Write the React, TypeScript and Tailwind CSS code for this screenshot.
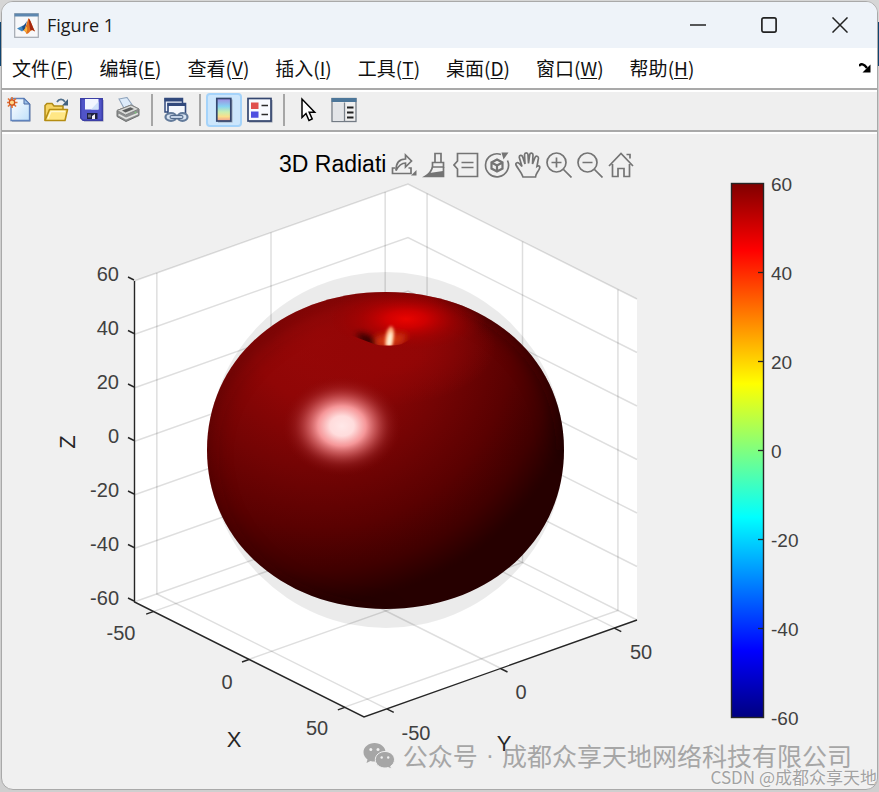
import type { ReactNode } from 'react';

const MENUS = [
  { label: '文件', accessKey: 'F' },
  { label: '编辑', accessKey: 'E' },
  { label: '查看', accessKey: 'V' },
  { label: '插入', accessKey: 'I' },
  { label: '工具', accessKey: 'T' },
  { label: '桌面', accessKey: 'D' },
  { label: '窗口', accessKey: 'W' },
  { label: '帮助', accessKey: 'H' },
];

const TICKS = [60, 40, 20, 0, -20, -40, -60];

// Outline of the axes box
const LEFT = { x: 134, y: 281 };
const BACK = { x: 408, y: 184 };
const RIGHT = { x: 637, y: 299 };
const FRONT = { x: 364, y: 717 };
const HEIGHT = 321;
const Z_STEP = HEIGHT / 6;

const FLOOR_TICKS = [
  { value: -50, t: 1 / 12 },
  { value: 0, t: 0.5 },
  { value: 50, t: 11 / 12 },
];

const X_LABELS = [
  { text: '-50', x: 121, y: 640 },
  { text: '0', x: 227, y: 689 },
  { text: '50', x: 317, y: 735 },
];

const Y_LABELS = [
  { text: '-50', x: 416, y: 740 },
  { text: '0', x: 521, y: 699 },
  { text: '50', x: 641, y: 659 },
];

function MatlabLogo() {
  return (
    <svg viewBox="0 0 25 25" className="h-[25px] w-[25px]" aria-hidden="true">
      <rect x="0.7" y="0.7" width="23.6" height="23.6" fill="#f7f8fa" stroke="#a3a9b1" strokeWidth="1.2" />
      <path d="M0.5 0.5h24v3h-24z" fill="#5d87b0" />
      <path d="M3 15.5l5-2.5 3 3-3 2.5z" fill="#3c86c0" />
      <path d="M8 13c2-.5 3-2 5-5l-2 8-2 1.500z" fill="#1d4f86" />
      <path d="M14.500 5.500c1.500 0 3.500 7 6.500 13-2-1.500-3.500-1.800-5 0-1.200 1.500-2.200 2.200-3.500 2.500-.8-2-2-3.500-3.500-3.500 3-1.500 3.800-9 5.500-12z" fill="#e0701f" />
      <path d="M14.500 5.500c1.500 0 3.500 7 6.500 13-2-1.500-3.300-2-4.500-1-1-3-1.200-8-2-12z" fill="#a3260f" />
      <path d="M12.500 13.500c1 1.500 1 4-.2 6.500-.6-1.500-1.500-2.300-2.500-2.500z" fill="#f8b43c" />
    </svg>
  );
}

function NewIcon() {
  return (
    <svg viewBox="0 0 26 26" className="h-[26px] w-[26px]" aria-hidden="true">
      <defs>
        <linearGradient id="page" x1="0" y1="0" x2="1" y2="1">
          <stop offset="0" stopColor="#ffffff" />
          <stop offset="1" stopColor="#bfe0fa" />
        </linearGradient>
      </defs>
      <path d="M5 2.500h13.500l5 5V24.500H5z" fill="#6d7fa0" />
      <path d="M4 1.500h13l5.500 5.500v16.500H4z" fill="url(#page)" stroke="#5f83bd" strokeWidth="1.3" />
      <path d="M17 1.500V7h5.500z" fill="#9cc3ea" stroke="#4a6aa5" />
      <path d="M5 0v11M-.5 5.500h11M1 1.500l8 8M9 1.500l-8 8" stroke="#e0743a" strokeWidth="1.700" />
      <circle cx="5" cy="5.500" r="2.700" fill="#ffd98a" stroke="#d0501a" strokeWidth="1.300" />
    </svg>
  );
}

function OpenIcon() {
  return (
    <svg viewBox="0 0 26 26" className="h-[26px] w-[26px]" aria-hidden="true">
      <path d="M2 23.500V8.500l2-2h5l2 2.500h9v3" fill="#f6d462" stroke="#b08a14" strokeWidth="1.500" />
      <path d="M2 23.500L6.500 12.500H24.500L22 23.500z" fill="#ffe785" stroke="#b58d12" strokeWidth="1.600" strokeLinejoin="round" />
      <path d="M5 21.500L8 14.500h14" fill="none" stroke="#fff8cf" strokeWidth="1.300" />
      <path d="M14 5c2-3.500 6-3.500 8 0" fill="none" stroke="#53718c" strokeWidth="1.800" />
      <path d="M25 2v6.500h-6z" fill="#41617d" />
    </svg>
  );
}

function SaveIcon() {
  return (
    <svg viewBox="0 0 26 26" className="h-[26px] w-[26px]" aria-hidden="true">
      <path d="M3 3h21.500v21.500H5z" fill="#8d8fae" />
      <path d="M1.700 1.700h21.600v21.600H4L1.700 21z" fill="#5054c8" stroke="#3c3fa6" strokeWidth="1.400" />
      <path d="M6 2h13.500v10.500H6z" fill="#f2f5ff" />
      <path d="M12 12.500l7.500-8v8z" fill="#cfe0fa" />
      <path d="M8 16h10.500v6H8z" fill="#1f2140" />
      <path d="M13 19l3-2v5h-3z" fill="#f2f2f6" />
      <path d="M9 17.500h3v3H9z" fill="#6b6e80" />
    </svg>
  );
}

function PrintIcon() {
  return (
    <svg viewBox="0 0 26 26" className="h-[26px] w-[26px]" aria-hidden="true">
      <path d="M4 2l8-1.500L18 9l-8 4z" fill="#ddebfa" stroke="#8fa4bd" strokeWidth="1.100" />
      <path d="M2 13.500L16 8l8 4v6.500L11 24.500 2 19.500z" fill="#8d8f8f" stroke="#6e7070" strokeLinejoin="round" />
      <path d="M2 13.500L16 8l8 4-13.500 6z" fill="#d9dad8" stroke="#828484" strokeLinejoin="round" />
      <path d="M7 13.500l8.500-3.300 3.500 1.800-8.500 3.500z" fill="#5b5d5d" />
      <path d="M3.500 17.500l7.500 4 12-5" fill="none" stroke="#e3e4e2" strokeWidth="1.700" />
      <circle cx="20.500" cy="15.500" r="1" fill="#7cc47a" />
    </svg>
  );
}

function LinkIcon() {
  return (
    <svg viewBox="0 0 26 26" className="h-[26px] w-[26px]" aria-hidden="true">
      <path d="M2 1.500h17.500V15H2z" fill="#eef3fb" stroke="#31497c" strokeWidth="1.500" />
      <path d="M1.500 1h18.500v3.500H1.500z" fill="#31497c" />
      <path d="M5 6.500h17.500V19H5z" fill="#f5f8fd" stroke="#31497c" strokeWidth="1.600" />
      <path d="M4.500 6h18.500v3H4.500z" fill="#31497c" />
      <ellipse cx="8" cy="20" rx="5.500" ry="3.800" fill="#d9e4f2" stroke="#637b9b" strokeWidth="2.200" />
      <ellipse cx="19.500" cy="20" rx="5" ry="3.800" fill="#d9e4f2" stroke="#637b9b" strokeWidth="2.200" />
      <path d="M8.500 20h10" stroke="#536b8c" strokeWidth="4" strokeLinecap="round" />
      <path d="M8.500 20h10" stroke="#c3d2e6" strokeWidth="1.800" strokeLinecap="round" />
    </svg>
  );
}

function ColorbarIcon() {
  return (
    <svg viewBox="0 0 26 26" className="h-[26px] w-[26px]" aria-hidden="true">
      <defs>
        <linearGradient id="mini" x1="0" y1="0" x2="0" y2="1">
          <stop offset="0" stopColor="#a08ae0" />
          <stop offset="0.350" stopColor="#86d3f2" />
          <stop offset="0.600" stopColor="#c9efb0" />
          <stop offset="0.800" stopColor="#f9e08b" />
          <stop offset="1" stopColor="#f29c8d" />
        </linearGradient>
      </defs>
      <path d="M7 2.500h14.500v23H7z" fill="#9aa5b5" />
      <rect x="5.800" y="1.500" width="14" height="22.500" fill="url(#mini)" stroke="#34466f" strokeWidth="1.700" />
    </svg>
  );
}

function LegendIcon() {
  return (
    <svg viewBox="0 0 26 26" className="h-[26px] w-[26px]" aria-hidden="true">
      <path d="M2 3h23.500v22.500H2z" fill="#9199a8" />
      <rect x="1" y="1.500" width="23" height="22.500" fill="#f8faff" stroke="#34466f" strokeWidth="1.700" />
      <path d="M4 5.500h7.500V12H4z" fill="#e0504f" />
      <path d="M4 14.500h7.500v6.300H4z" fill="#4d4ee0" />
      <path d="M14.500 8.500H21M14.500 17.500H21" stroke="#2b2b2b" strokeWidth="1.700" />
    </svg>
  );
}

function PointerIcon() {
  return (
    <svg viewBox="0 0 26 26" className="h-[26px] w-[26px]" aria-hidden="true">
      <path
        d="M7 2v18.500l4-4 3 7 3.200-1.500-3-6.700h5.500z"
        fill="#fff"
        stroke="#000"
        strokeWidth="1.500"
      />
    </svg>
  );
}

function InspectorIcon() {
  return (
    <svg viewBox="0 0 26 26" className="h-[26px] w-[26px]" aria-hidden="true">
      <rect x="1" y="1.500" width="24" height="23" fill="#efefef" stroke="#737b84" strokeWidth="1.300" />
      <path d="M.5 1h25v4H.5z" fill="#4c7699" />
      <path d="M2 5.500h10.500V24H2z" fill="#e3e5e8" />
      <path d="M13.500 5.500V24" stroke="#7b838c" strokeWidth="1.300" />
      <path d="M16 10.500h6.500M16 15.500h6.500M16 20.500h6.500" stroke="#222" strokeWidth="1.900" />
    </svg>
  );
}

const FILE_TOOLS = [
  { label: '新建图窗', icon: NewIcon },
  { label: '打开文件', icon: OpenIcon },
  { label: '保存图窗', icon: SaveIcon },
  { label: '打印图窗', icon: PrintIcon },
];

function ToolButton({ label, active, children }: { label: string; active?: boolean; children: ReactNode }) {
  return (
    <button
      type="button"
      aria-label={label}
      className={
        active
          ? 'flex h-[34px] w-9 items-center justify-center rounded-[4px] border-2 border-[#a5d3fa] bg-[#cce6fc]'
          : 'flex h-[34px] w-9 items-center justify-center rounded-[4px] hover:bg-[#e0eefa]'
      }
    >
      {children}
    </button>
  );
}

function Separator() {
  return <div className="mx-[5px] h-8 w-[2px] bg-[#a6a6a6]" />;
}

const AXES_TOOLS = [
  {
    label: '导出',
    shape: (
      <>
        <path d="M4 16H1.500v5.500H20V16h-2.500" />
        <path d="M5 18.500c0-8 3-11.500 9.500-11.500V3l6 6-6 6v-4c-4 0-6.500 2-9.500 7.500z" />
        <path d="M25.500 18v5.500H20z" fill="#747474" stroke="none" />
      </>
    ),
  },
  {
    label: '刷亮/选择数据',
    shape: (
      <>
        <path d="M13 1.500h6v9h-6zM10.500 10.500h11V15h-11z" />
        <path d="M10.500 15c-1 4-3 7-7.500 9.500h18.500V15" />
        <path d="M7.500 21L21 19V24H4z" fill="#747474" stroke="none" />
      </>
    ),
  },
  {
    label: '数据提示',
    shape: <path d="M4.500 1.500h20v23h-20V17L1 13l3.500-4zM8.500 10.500h12M8.500 15.500h12" />,
  },
  {
    label: '三维旋转',
    shape: (
      <>
        <path d="M17 2.500A11.500 11.500 0 1 0 23.500 8.500" />
        <path d="M17.500 0.500h7l-5 7z" fill="#747474" stroke="none" />
        <path d="M13 7.500l5.500 3v6L13 19.500l-5.500-3v-6zM7.500 10.500l5.500 3 5.500-3M13 13.500v6" strokeWidth="2.200" />
      </>
    ),
  },
  {
    label: '平移',
    shape: (
      <path d="M8 25C6.500 20 3 17 1 13c-.8-2.300 2-3.300 3.500-1.200L7 14.500 4.300 5.500c-.3-2.400 2.600-3 3.400-.5l2.300 7L9.500 2.700c.2-2.400 3.300-2.400 3.500 0l.5 8.800 1.200-8.800c.4-2.400 3.300-2 3.300.3L17.500 12l2.500-6.500c.9-2.200 3.600-1.400 3.400.9l-1.400 8c2-1.500 3.500 0 2.300 2.600C23 20 21 21 20.500 25z" />
    ),
  },
  {
    label: '放大',
    shape: (
      <>
        <circle cx="10.500" cy="10.500" r="9.500" />
        <path d="M17.500 17.500l8 8M5.500 10.500h10M10.500 5.500v10" />
      </>
    ),
  },
  {
    label: '缩小',
    shape: (
      <>
        <circle cx="10.500" cy="10.500" r="9.500" />
        <path d="M17.500 17.500l8 8M5.500 10.500h10" />
      </>
    ),
  },
  {
    label: '还原视图',
    shape: (
      <>
        <path d="M1 14L13 1.500 25 14M4.500 12v12.500h5.500v-8h6v8h5.500V12" />
        <path d="M18.500 2.500H22v4" />
      </>
    ),
  },
];

function Apple() {
  return (
    <g>
      <defs>
        <radialGradient id="skin" gradientUnits="userSpaceOnUse" cx="320" cy="334" r="268">
          <stop offset="0" stopColor="#980808" />
          <stop offset="0.250" stopColor="#900606" />
          <stop offset="0.500" stopColor="#740404" />
          <stop offset="0.720" stopColor="#5a0101" />
          <stop offset="0.880" stopColor="#400000" />
          <stop offset="0.980" stopColor="#290000" />
          <stop offset="1" stopColor="#260000" />
        </radialGradient>
        <radialGradient id="shine">
          <stop offset="0" stopColor="#ffe8e8" />
          <stop offset="0.200" stopColor="#ffdcdc" />
          <stop offset="0.400" stopColor="#fa9c9e" stopOpacity="0.960" />
          <stop offset="0.580" stopColor="#d8686a" stopOpacity="0.700" />
          <stop offset="0.780" stopColor="#b03a3c" stopOpacity="0.300" />
          <stop offset="1" stopColor="#800808" stopOpacity="0" />
        </radialGradient>
        <radialGradient id="glow">
          <stop offset="0" stopColor="#ea0400" />
          <stop offset="0.250" stopColor="#d60000" stopOpacity="0.900" />
          <stop offset="0.600" stopColor="#b00000" stopOpacity="0.450" />
          <stop offset="1" stopColor="#900000" stopOpacity="0" />
        </radialGradient>
        <radialGradient id="lip">
          <stop offset="0" stopColor="#940606" />
          <stop offset="0.350" stopColor="#940606" stopOpacity="0.850" />
          <stop offset="1" stopColor="#940606" stopOpacity="0" />
        </radialGradient>
        <filter id="soft" filterUnits="userSpaceOnUse" x="150" y="240" width="470" height="420">
          <feGaussianBlur stdDeviation="13" />
        </filter>
        <filter id="fade" filterUnits="userSpaceOnUse" x="340" y="300" width="100" height="60">
          <feGaussianBlur stdDeviation="3" />
        </filter>
        <filter id="glint" filterUnits="userSpaceOnUse" x="340" y="300" width="100" height="60">
          <feGaussianBlur stdDeviation="1.500" />
        </filter>
        <clipPath id="body">
          <path
            d="M386 292C489 292 564 359 564 450S489 609 386 609 207 541 207 450 283 292 386 292z"
            shapeRendering="crispEdges"
          />
        </clipPath>
        <clipPath id="dimple">
          <path d="M340 300H440V332C418 332 409 341 402 344C394 346 380 346 374 344C366 341 354 336 340 332z" />
        </clipPath>
      </defs>
      <g clipPath="url(#body)">
        <path d="M200 285h370v330H200z" fill="url(#skin)" />
        <path d="M446 286C510 300 576 360 578 450" fill="none" stroke="#140000" strokeWidth="26" filter="url(#soft)" opacity="0.700" />
        <path d="M420 284C310 282 201 350 199 450S280 621 386 623" fill="none" stroke="#200000" strokeWidth="12" filter="url(#soft)" opacity="0.500" />
        <ellipse cx="384" cy="346" rx="112" ry="60" fill="url(#lip)" />
        <ellipse cx="406" cy="319" rx="80" ry="33" fill="url(#glow)" />
        <ellipse cx="380" cy="358" rx="50" ry="20" fill="url(#lip)" />
        <g clipPath="url(#dimple)">
          <path d="M356 334c8-2 20 3 22 13-12 0-17-5-22-13z" fill="#2a0400" filter="url(#fade)" />
          <path d="M374 338c8-5 26-8 34-2l-8 10-24 2z" fill="#cc3010" filter="url(#fade)" />
          <path d="M391 326c5 3 3 12 1 20h-7c0-8 1-17 6-20z" fill="#ffa878" filter="url(#glint)" />
          <path d="M391 331c2 3 1 9 0 15h-4c0-6 1-12 4-15z" fill="#fff6dc" filter="url(#glint)" />
        </g>
        <ellipse cx="342" cy="426" rx="60" ry="50" fill="url(#shine)" />
      </g>
    </g>
  );
}

function Axes() {
  return (
    <svg
      viewBox="2 134 875 655"
      className="block w-full font-['Liberation_Sans',Arial,sans-serif]"
      role="img"
      aria-label="3D Radiation"
    >
      <path d="M134 281L408 184 637 299V620L364 717 134 602z" fill="#fff" />

      <g fill="none" stroke="#000" strokeOpacity="0.130" strokeWidth="1.500">
        {TICKS.map((value, i) => (
          <path
            key={value}
            d={`M${LEFT.x} ${LEFT.y + i * Z_STEP}L${BACK.x} ${BACK.y + i * Z_STEP}L${RIGHT.x} ${RIGHT.y + i * Z_STEP}`}
          />
        ))}
        {FLOOR_TICKS.map(({ value, t }) => {
          const leftX = LEFT.x + 274 * t;
          const leftY = LEFT.y - 97 * t;
          const rightX = BACK.x + 229 * t;
          const rightY = BACK.y + 115 * t;
          return (
            <g key={value}>
              <path d={`M${leftX} ${leftY}v${HEIGHT}l230 115`} />
              <path d={`M${rightX} ${rightY}v${HEIGHT}l-274 97`} />
            </g>
          );
        })}
      </g>

      <circle cx="386" cy="450" r="178" fill="#000" fillOpacity="0.080" />
      <Apple />

      <g fill="none" stroke="#262626" strokeWidth="1.400">
        <path d="M134.500 281V602L364 717 637 620" />
        {TICKS.map((value, i) => (
          <path key={value} d={`M134 ${LEFT.y + i * Z_STEP - 1}l-6-3`} />
        ))}
        {FLOOR_TICKS.map(({ value, t }) => (
          <g key={value}>
            <path d={`M${LEFT.x + 230 * t} ${602 + 115 * t}l-7 2.500`} />
            <path d={`M${FRONT.x + 273 * t} ${FRONT.y - 97 * t}l7 3.500`} />
          </g>
        ))}
      </g>

      <g fill="#404040" fontSize="20">
        {TICKS.map((value, i) => (
          <text key={value} x="119" y={281 + i * 54} textAnchor="end">
            {value}
          </text>
        ))}
        {[...X_LABELS, ...Y_LABELS].map((label) => (
          <text key={`${label.x}-${label.y}`} x={label.x} y={label.y} textAnchor="middle">
            {label.text}
          </text>
        ))}
      </g>

      <g fill="#262626" fontSize="22" textAnchor="middle">
        <text x="234" y="747">X</text>
        <text x="504" y="751">Y</text>
        <text transform="translate(75 442) rotate(-90)">Z</text>
      </g>
      <text x="279" y="172" fontSize="23" fill="#000">3D Radiati</text>

      <defs>
        <linearGradient id="jet" x1="0" y1="0" x2="0" y2="1">
          <stop offset="0" stopColor="#800000" />
          <stop offset="0.125" stopColor="#ff0000" />
          <stop offset="0.375" stopColor="#ffff00" />
          <stop offset="0.625" stopColor="#00ffff" />
          <stop offset="0.875" stopColor="#0000ff" />
          <stop offset="1" stopColor="#000080" />
        </linearGradient>
      </defs>
      <rect x="731.500" y="183.500" width="32" height="534" fill="url(#jet)" stroke="#262626" strokeWidth="1.400" />
      <g fontSize="19" fill="#404040">
        {TICKS.map((value, i) => (
          <g key={value}>
            {i > 0 && i < 6 && <path d={`M758 ${183.5 + i * 89}h5`} stroke="#262626" strokeWidth="1.300" />}
            <text x="771" y={191 + i * 89}>
              {value}
            </text>
          </g>
        ))}
      </g>
    </svg>
  );
}

function WechatIcon() {
  return (
    <svg viewBox="0 0 32 27" className="h-[27px] w-8" aria-hidden="true">
      <path d="M11.500 1C5.500 1 .5 5 .5 10.200c0 3 1.600 5.500 4 7.200l-1 3.600 4-2c1.300.4 2.600.6 4 .6 6 0 11-4.200 11-9.400S17.500 1 11.500 1z" fill="#a6a6a6" />
      <path d="M22 9.500c-5.500 0-9.700 3.700-9.700 8.200S16.500 26 22 26c1.100 0 2.200-.2 3.200-.5l3.300 1.500-.8-2.900c2.400-1.500 3.800-3.900 3.800-6.400 0-4.500-4-8.200-9.500-8.200z" fill="#a6a6a6" stroke="#f0f0f0" />
      <g fill="#f0f0f0">
        <circle cx="7.800" cy="7.500" r="1.500" />
        <circle cx="15" cy="7.500" r="1.500" />
        <circle cx="18.700" cy="15.500" r="1.200" />
        <circle cx="25.200" cy="15.500" r="1.200" />
      </g>
    </svg>
  );
}

export default function App() {
  return (
    <div className="bg-[linear-gradient(#d6d6d6_22px,#0f4470_22px,#0f4470_66px,#cfcfcf_66px)] px-px pt-px pb-[2px] font-['Open_Sans','Noto_Sans_CJK_SC',sans-serif]">
      <main className="overflow-hidden rounded-xl border border-[#a9a9a9] bg-[#f0f0f0]">
        <header className="flex h-[46px] items-center bg-[#eef3f9] pr-[2px] pl-3">
          <MatlabLogo />
          <h1 className="ml-2 flex-1 text-[18px] text-[#1b1b1b]">Figure 1</h1>
          <button type="button" aria-label="最小化" className="flex h-full w-[71px] items-center justify-center">
            <svg viewBox="0 0 18 18" className="h-4 w-4" fill="none" stroke="#222" strokeWidth="1.800">
              <path d="M0 9h18" />
            </svg>
          </button>
          <button type="button" aria-label="最大化" className="flex h-full w-[71px] items-center justify-center">
            <svg viewBox="0 0 18 18" className="h-4 w-4" fill="none" stroke="#222" strokeWidth="1.900">
              <rect x="1" y="1" width="16" height="16" rx="2" />
            </svg>
          </button>
          <button type="button" aria-label="关闭" className="flex h-full w-[71px] items-center justify-center">
            <svg viewBox="0 0 18 18" className="h-4 w-4" fill="none" stroke="#222" strokeWidth="1.700">
              <path d="M.5 .5l17 17M17.500 .5L.5 17.500" />
            </svg>
          </button>
        </header>

        <nav className="flex h-[42px] items-center gap-[26px] border-b-2 border-[#a9a9a9] bg-white pr-[6px] pl-[10px] font-['Noto_Sans_CJK_SC',sans-serif] text-[19px] text-[#111]">
          {MENUS.map((menu) => (
            <button key={menu.accessKey} type="button" className="leading-7 whitespace-nowrap">
              {menu.label}(<span className="underline underline-offset-2">{menu.accessKey}</span>)
            </button>
          ))}
          <button type="button" aria-label="停靠图窗" className="ml-auto">
            <svg viewBox="0 0 12 10" className="h-[10px] w-3">
              <path d="M0 3c2-3 5-2 8 2" fill="none" stroke="#000" strokeWidth="2.400" />
              <path d="M11.500 1.500v8H3.500z" fill="#000" />
            </svg>
          </button>
        </nav>

        <div className="flex h-[42px] items-center border-t-2 border-b-2 border-t-white border-b-[#a9a9a9] bg-[#efefef] pb-[3px]">
          {FILE_TOOLS.map((tool) => (
            <ToolButton key={tool.label} label={tool.label}>
              <tool.icon />
            </ToolButton>
          ))}
          <Separator />
          <ToolButton label="链接绘图">
            <LinkIcon />
          </ToolButton>
          <Separator />
          <ToolButton label="插入颜色栏" active>
            <ColorbarIcon />
          </ToolButton>
          <ToolButton label="插入图例">
            <LegendIcon />
          </ToolButton>
          <Separator />
          <ToolButton label="编辑绘图">
            <PointerIcon />
          </ToolButton>
          <ToolButton label="打开属性检查器">
            <InspectorIcon />
          </ToolButton>
        </div>

        <section className="relative border-t-2 border-white">
          <Axes />
          <div className="absolute top-[17px] left-[386px] flex bg-[#f0f0f0]">
            {AXES_TOOLS.map((tool) => (
              <button
                key={tool.label}
                type="button"
                aria-label={tool.label}
                className="flex h-7 w-[31px] items-center justify-center"
              >
                <svg
                  viewBox="0 0 26 26"
                  className="h-[26px] w-[26px]"
                  fill="none"
                  stroke="#747474"
                  strokeWidth="1.700"
                >
                  {tool.shape}
                </svg>
              </button>
            ))}
          </div>
          <div className="absolute right-[25px] bottom-4 flex items-center gap-2 font-['Noto_Sans_CJK_SC',sans-serif] text-[25px] leading-9 whitespace-nowrap text-[#a6a6a6]">
            <WechatIcon />
            <span>公众号</span>
            <span className="font-['Liberation_Sans',sans-serif]">·</span>
            <span>成都众享天地网络科技有限公司</span>
          </div>
          <div className="absolute right-0 bottom-0 font-['Noto_Sans_CJK_SC',sans-serif] text-[17px] leading-6 whitespace-nowrap text-[#a2a2a2] [text-shadow:0_0_2px_#fff]">
            CSDN @成都众享天地
          </div>
        </section>
      </main>
    </div>
  );
}
